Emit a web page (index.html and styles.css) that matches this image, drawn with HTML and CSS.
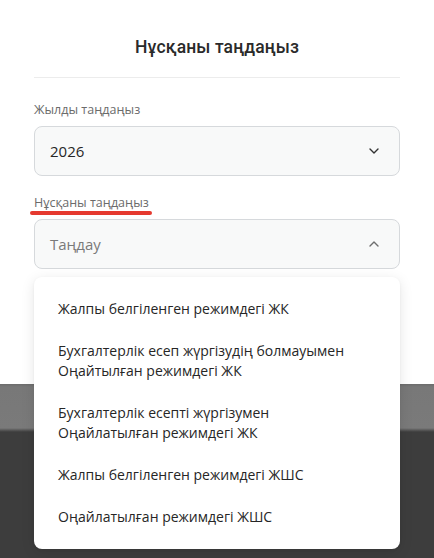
FILE: index.html
```html
<!DOCTYPE html>
<html lang="kk">
<head>
<meta charset="utf-8">
<title>Нұсқаны таңдаңыз</title>
<link rel="stylesheet" href="styles.css">
</head>
<body>
<div class="page">
  <section class="sheet">
    <header class="sheet-header">
      <h1 class="sheet-title">Нұсқаны таңдаңыз</h1>
    </header>
    <div class="field">
      <div class="field-label">Жылды таңдаңыз</div>
      <div class="select">
        <span class="select-value">2026</span>
        <svg class="chevron chevron-dark" width="12" height="8" viewBox="0 0 12 8"><path d="M2 2l4 4 4-4" fill="none" stroke="currentColor" stroke-width="1.4" stroke-linecap="round" stroke-linejoin="round"/></svg>
      </div>
    </div>
    <div class="field field-second">
      <div class="field-label field-label-marked">Нұсқаны таңдаңыз<span class="mark"></span></div>
      <div class="select select-open">
        <span class="select-placeholder">Таңдау</span>
        <svg class="chevron chevron-light" width="12" height="8" viewBox="0 0 12 8"><path d="M2 6l4-4 4 4" fill="none" stroke="currentColor" stroke-width="1.4" stroke-linecap="round" stroke-linejoin="round"/></svg>
        <ul class="menu">
          <li class="menu-item">Жалпы белгіленген режимдегі ЖК</li>
          <li class="menu-item">Бухгалтерлік есеп жүргізудің болмауымен<br>Оңайтылған режимдегі ЖК</li>
          <li class="menu-item">Бухгалтерлік есепті жүргізумен<br>Оңайлатылған режимдегі ЖК</li>
          <li class="menu-item">Жалпы белгіленген режимдегі ЖШС</li>
          <li class="menu-item">Оңайлатылған режимдегі ЖШС</li>
        </ul>
      </div>
    </div>
  </section>
  <div class="band"></div>
  <div class="backdrop"></div>
</div>
</body>
</html>
```

FILE: styles.css
```css
* { box-sizing: border-box; }
html, body { margin: 0; padding: 0; }
body {
  width: 434px;
  height: 558px;
  overflow: hidden;
  font-family: "Open Sans", "Noto Sans", sans-serif;
  background: #3d3d3d;
}
.page {
  display: flex;
  flex-direction: column;
  height: 558px;
}
.sheet {
  height: 384px;
  background: #ffffff;
  padding: 0 34px;
  position: relative;
  z-index: 2;
}
.sheet-header {
  height: 78px;
  padding-top: 17px;
  border-bottom: 1px solid #ececec;
  display: flex;
  align-items: flex-start;
  justify-content: center;
}
.sheet-title {
  margin: 0;
  height: 60px;
  line-height: 60px;
  font-family: Roboto, "Noto Sans", sans-serif;
  font-weight: 500;
  font-size: 17.5px;
  color: #2a2a2a;
  letter-spacing: 0.1px;
}
.field {
  display: flex;
  flex-direction: column;
  gap: 7px;
  margin-top: 23px;
}
.field-second { margin-top: 18px; }
.field-label {
  font-size: 12.5px;
  line-height: 18px;
  color: #6b6b6b;
  position: relative;
  align-self: flex-start;
}
.mark {
  position: absolute;
  left: -4px;
  right: -3px;
  top: 17px;
  height: 3.5px;
  border-radius: 2px;
  background: #e5392f;
}
.select {
  position: relative;
  height: 50px;
  border: 1px solid #d6d9dc;
  border-radius: 8px;
  background: #f8f9f9;
  display: flex;
  align-items: center;
  justify-content: space-between;
  padding: 0 19px 0 15px;
}
.select-value {
  font-size: 15px;
  color: #262626;
}
.select-placeholder {
  font-size: 15px;
  color: #7a7a7a;
}
.chevron { display: block; }
.chevron-dark { color: #333333; }
.chevron-light { color: #6e6e6e; }
.menu {
  position: absolute;
  left: -1px;
  right: -1px;
  top: 57px;
  margin: 0;
  padding: 11px 0;
  list-style: none;
  background: #ffffff;
  border-radius: 8px;
  box-shadow: 0 3px 14px rgba(0, 0, 0, 0.10), 0 1px 3px rgba(0, 0, 0, 0.05);
  z-index: 5;
}
.menu-item {
  padding: 11px 24px;
  font-size: 14px;
  line-height: 20px;
  color: #262626;
}
.band {
  height: 48px;
  background: linear-gradient(#6c6c6c 0, #787878 3px, #7a7a7a 44px, #5a5a5a 46px, #3d3d3d 48px);
}
.backdrop {
  flex: 1;
  background: #3d3d3d;
}
```
